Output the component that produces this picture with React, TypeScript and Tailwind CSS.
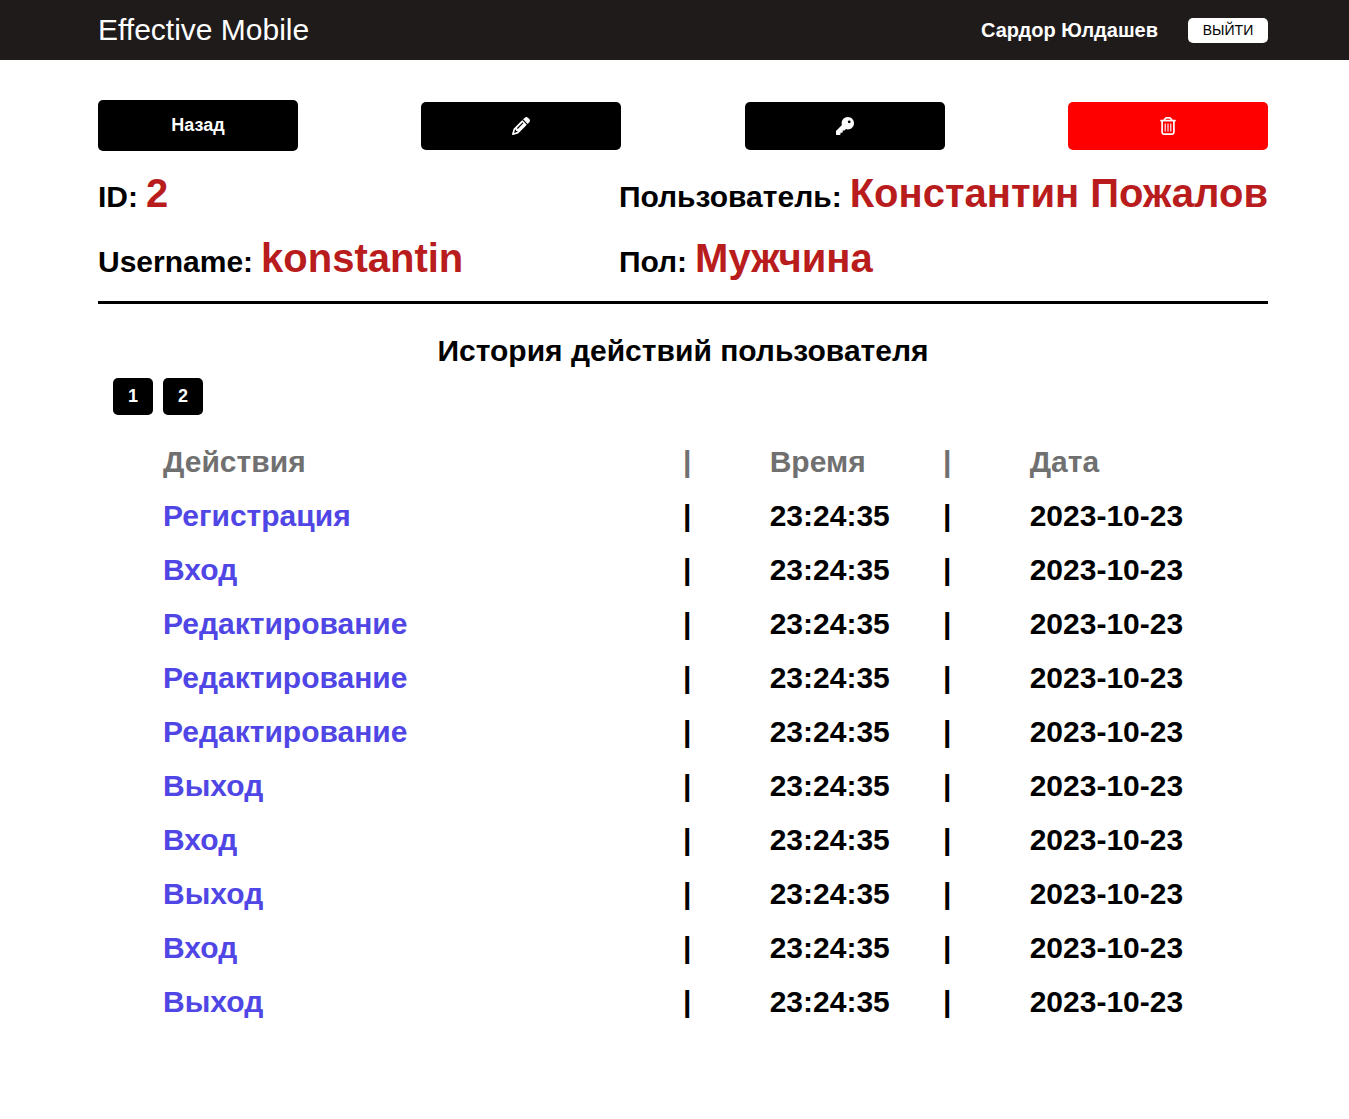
import { FaKey, FaPencil, FaRegTrashCan } from "react-icons/fa6";

const details = [
  { label: "ID", value: "2" },
  { label: "Пользователь", value: "Константин Пожалов" },
  { label: "Username", value: "konstantin" },
  { label: "Пол", value: "Мужчина" },
];

const actions = [
  "Регистрация",
  "Вход",
  "Редактирование",
  "Редактирование",
  "Редактирование",
  "Выход",
  "Вход",
  "Выход",
  "Вход",
  "Выход",
].map((name) => ({ name, time: "23:24:35", date: "2023-10-23" }));

function Header() {
  return (
    <header className="flex h-[60px] items-center justify-between bg-[#1f1b1b] pr-[81px] pl-[98px] text-white">
      <a href="#" className="text-[30px] leading-[34px]">
        Effective Mobile
      </a>
      <div className="flex items-center gap-[30px]">
        <span className="text-[20px] font-bold">Сардор Юлдашев</span>
        <button
          type="button"
          className="h-[25px] w-20 rounded-[5px] bg-white text-[14px] leading-4 text-black"
        >
          ВЫЙТИ
        </button>
      </div>
    </header>
  );
}

function Toolbar() {
  return (
    <div className="flex items-center justify-between">
      <button
        type="button"
        className="w-[200px] rounded-[5px] bg-black py-[15px] text-[18px] leading-[21px] font-bold text-white"
      >
        Назад
      </button>
      <button
        type="button"
        aria-label="Редактировать"
        className="flex w-[200px] justify-center rounded-[5px] bg-black py-[15px] text-[18px] text-white"
      >
        <FaPencil />
      </button>
      <button
        type="button"
        aria-label="Сменить пароль"
        className="flex w-[200px] justify-center rounded-[5px] bg-black py-[15px] text-[18px] text-white"
      >
        <FaKey />
      </button>
      <button
        type="button"
        aria-label="Удалить"
        className="flex w-[200px] justify-center rounded-[5px] bg-[#ff0000] py-[15px] text-[18px] text-white"
      >
        <FaRegTrashCan />
      </button>
    </div>
  );
}

function History() {
  return (
    <section className="pt-[30px]">
      <h2 className="text-center text-[30px] leading-[34px] font-bold">
        История действий пользователя
      </h2>
      <nav className="mt-[10px] flex gap-[10px] px-[15px]">
        {[1, 2].map((page) => (
          <button
            key={page}
            type="button"
            className="w-10 rounded-[5px] bg-black py-2 text-[18px] leading-[21px] font-bold text-white"
          >
            {page}
          </button>
        ))}
      </nav>
      <div className="mt-5 px-[65px]">
        <table className="w-full table-fixed text-left text-[30px] leading-[34px] font-bold">
          <colgroup>
            <col className="w-6/12" />
            <col className="w-1/12" />
            <col className="w-2/12" />
            <col className="w-1/12" />
            <col className="w-2/12" />
          </colgroup>
          <thead>
            <tr className="text-[#707070]">
              <th className="py-[10px]">Действия</th>
              <th className="py-[10px]">|</th>
              <th className="py-[10px]">Время</th>
              <th className="py-[10px]">|</th>
              <th className="py-[10px]">Дата</th>
            </tr>
          </thead>
          <tbody>
            {actions.map((action, index) => (
              <tr key={index}>
                <td className="py-[10px] text-[#4f46e5]">{action.name}</td>
                <td className="py-[10px]">|</td>
                <td className="py-[10px]">{action.time}</td>
                <td className="py-[10px]">|</td>
                <td className="py-[10px]">{action.date}</td>
              </tr>
            ))}
          </tbody>
        </table>
      </div>
    </section>
  );
}

export default function App() {
  return (
    <div className="min-h-screen bg-white font-['Liberation_Sans',Arial,sans-serif] text-black">
      <Header />
      <main className="pt-10 pr-[81px] pb-20 pl-[98px]">
        <Toolbar />
        <dl className="grid grid-cols-[auto_auto] justify-between gap-y-5 border-b-[3px] border-black py-5 font-bold">
          {details.map((item) => (
            <div key={item.label} className="flex items-baseline gap-2">
              <dt className="text-[30px] leading-[34px]">{item.label}:</dt>
              <dd className="text-[40px] leading-[45px] text-[#b91c1c]">{item.value}</dd>
            </div>
          ))}
        </dl>
        <History />
      </main>
    </div>
  );
}
